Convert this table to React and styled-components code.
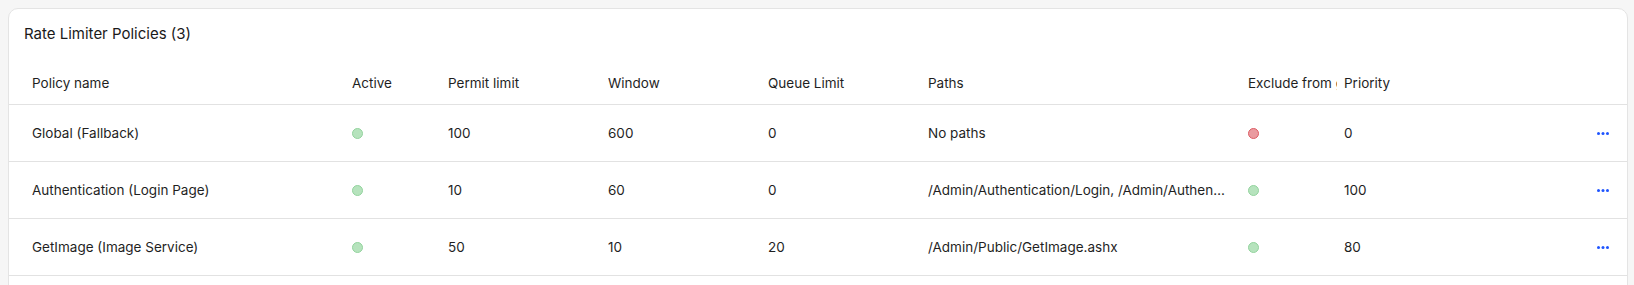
import styled, { createGlobalStyle } from "styled-components";

const Global = createGlobalStyle`
  body {
    margin: 0;
    background: #f6f6f6;
    font-family: Inter, "Liberation Sans", sans-serif;
    color: #1f1f1f;
  }
`;

const Page = styled.div`
  padding: 8px 6px 0 8px;
`;

const Card = styled.div`
  background: #fff;
  border: 1px solid #e4e4e4;
  border-radius: 10px;
  overflow: hidden;
  padding-bottom: 40px;
`;

const Title = styled.h2`
  margin: 0;
  padding: 15px 15px 18px;
  font-size: 15px;
  line-height: 20px;
  font-weight: 400;
  color: #1a1a1a;
`;

const cols = "320px 96px 160px 160px 160px 320px 96px 1fr 40px";

const Row = styled.div`
  display: grid;
  grid-template-columns: ${cols};
  align-items: center;
  height: ${(p) => (p.$head ? "42px" : "56px")};
  padding-left: 23px;
  padding-right: 18px;
  border-bottom: 1px solid #e2e2e2;
  font-size: 13.5px;
`;

const Cell = styled.div`
  white-space: nowrap;
  overflow: hidden;
  text-overflow: ${(p) => (p.$ellipsis ? "ellipsis" : "clip")};
  margin-right: ${(p) => p.$gap || 0}px;
`;

const Dot = styled.span`
  display: block;
  width: 9px;
  height: 9px;
  border-radius: 50%;
  background: ${(p) => (p.$on ? "#b6e3bd" : "#ea9ba0")};
  border: 1px solid ${(p) => (p.$on ? "#92d39d" : "#dc5d64")};
`;

const Actions = styled.div`
  display: flex;
  justify-content: flex-end;
`;

const More = () => (
  <svg width="12" height="3" viewBox="0 0 12 3">
    <circle cx="1.5" cy="1.5" r="1.5" fill="#1f55ff" />
    <circle cx="6" cy="1.5" r="1.5" fill="#1f55ff" />
    <circle cx="10.5" cy="1.5" r="1.5" fill="#1f55ff" />
  </svg>
);

const policies = [
  { name: "Global (Fallback)", active: true, permit: 100, window: 600, queue: 0, paths: "No paths", exclude: false, priority: 0 },
  { name: "Authentication (Login Page)", active: true, permit: 10, window: 60, queue: 0, paths: "/Admin/Authentication/Login, /Admin/Authentication/Logout", exclude: true, priority: 100 },
  { name: "GetImage (Image Service)", active: true, permit: 50, window: 10, queue: 20, paths: "/Admin/Public/GetImage.ashx", exclude: true, priority: 80 },
];

export default function App() {
  return (
    <Page>
      <Global />
      <Card>
        <Title>Rate Limiter Policies ({policies.length})</Title>
        <Row $head>
          <Cell>Policy name</Cell>
          <Cell>Active</Cell>
          <Cell>Permit limit</Cell>
          <Cell>Window</Cell>
          <Cell>Queue Limit</Cell>
          <Cell>Paths</Cell>
          <Cell $gap={7}>Exclude from global</Cell>
          <Cell>Priority</Cell>
          <Cell />
        </Row>
        {policies.map((p) => (
          <Row key={p.name}>
            <Cell>{p.name}</Cell>
            <Cell><Dot $on={p.active} /></Cell>
            <Cell>{p.permit}</Cell>
            <Cell>{p.window}</Cell>
            <Cell>{p.queue}</Cell>
            <Cell $ellipsis $gap={22}>{p.paths}</Cell>
            <Cell><Dot $on={p.exclude} /></Cell>
            <Cell>{p.priority}</Cell>
            <Actions><More /></Actions>
          </Row>
        ))}
      </Card>
    </Page>
  );
}
